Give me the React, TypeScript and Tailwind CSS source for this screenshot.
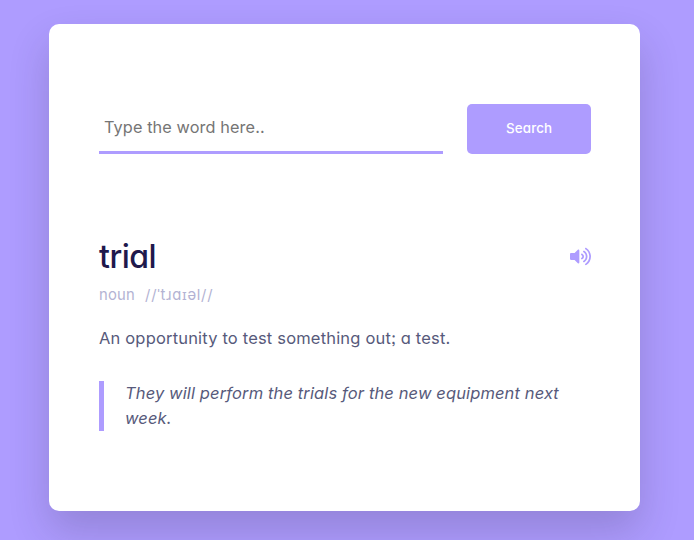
import React from "react";
import { FaVolumeUp } from "react-icons/fa";

export default function App() {
  return (
    <main className="flex h-[540px] w-[694px] items-start overflow-hidden bg-[#ae9cff] pt-[23.5px] pl-[49.4px] font-['Inter','Noto_Sans',sans-serif] [font-feature-settings:'cv11','ss03']">
      <section className="h-[487px] w-[591px] rounded-[10px] bg-white px-[49.6px] pt-[80px] shadow-[0_20px_40px_rgba(38,33,61,0.2)]">
        <div className="flex h-[50px] justify-between">
          <input
            type="text"
            placeholder="Type the word here.."
            className="h-[50px] w-[344.4px] border-b-[3px] border-[#ae9cff] px-[5px] text-[16.3px] tracking-[0.1px] outline-none placeholder:text-[#757575]"
          />
          <button className="h-[50px] w-[123.4px] rounded-[5px] bg-[#ae9cff] text-[13.4px] font-medium tracking-[0.1px] text-white">
            Search
          </button>
        </div>
        <div className="mt-[79px]">
          <div className="flex h-[48px] items-center justify-between">
            <h3 className="text-[32px] font-medium leading-[48px] tracking-[-0.5px] text-[#1f194c]">trial</h3>
            <button aria-label="Play pronunciation" className="text-[#ae9cff]">
              <FaVolumeUp size={21} />
            </button>
          </div>
          <div className="mt-[3px] flex h-[24px] items-center gap-[10px] text-[14.8px] text-[#b3b3d3]">
            <p className="tracking-[0.25px]">noun</p>
            <p className="tracking-[0.7px]">//ˈtɹaɪəl//</p>
          </div>
          <p className="mt-[18px] text-[16.5px] leading-6 tracking-[0.18px] text-[#575a7b]">
            An opportunity to test something out; a test.
          </p>
          <p className="mt-[31px] border-l-[5px] border-[#ae9cff] pr-[20px] pl-[21px] text-[16.5px] leading-[25px] tracking-[0.12px] italic text-[#575a7b]">
            They will perform the trials for the new equipment next week.
          </p>
        </div>
      </section>
    </main>
  );
}
